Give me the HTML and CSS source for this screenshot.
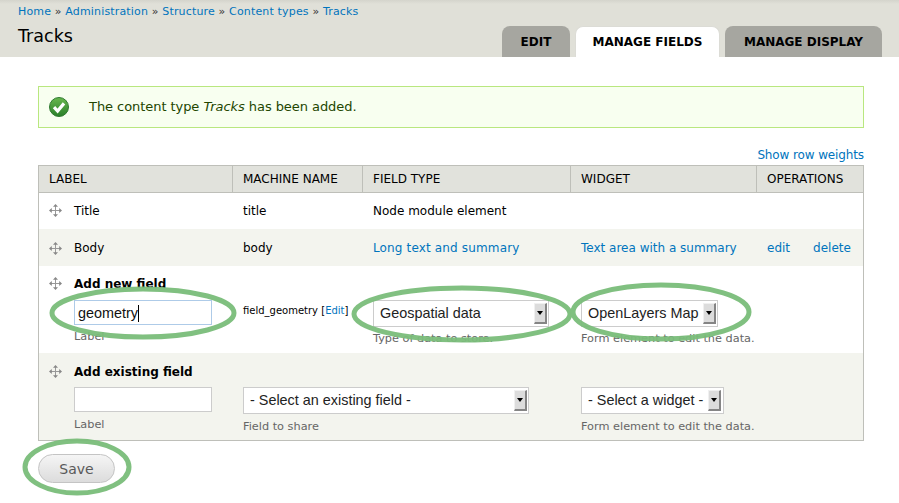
FILE: index.html
```html
<!DOCTYPE html>
<html lang="en">
<head>
<meta charset="utf-8">
<title>Tracks</title>
<link rel="stylesheet" href="styles.css">
</head>
<body>
<header class="head">
  <div class="head-left">
    <nav class="crumbs"><a href="#">Home</a> » <a href="#">Administration</a> » <a href="#">Structure</a> » <a href="#">Content types</a> » <a href="#">Tracks</a></nav>
    <h1 class="title">Tracks</h1>
  </div>
  <ul class="tabs">
    <li class="tab tab-edit">EDIT</li>
    <li class="tab tab-active">MANAGE FIELDS</li>
    <li class="tab tab-display">MANAGE DISPLAY</li>
  </ul>
</header>
<main class="page">
  <div class="message">
    <svg class="msg-icon" width="20" height="20" viewBox="0 0 20 20"><defs><linearGradient id="g" x1="0" y1="0" x2="0" y2="1"><stop offset="0" stop-color="#68b84e"/><stop offset="1" stop-color="#2a7f2a"/></linearGradient></defs><circle cx="10" cy="10" r="9.5" fill="url(#g)" stroke="#2f7a30"/><path d="M5 10.2 L8.6 14 L15 6.4" fill="none" stroke="#fff" stroke-width="3.2"/></svg>
    <span>The content type <em>Tracks</em> has been added.</span>
  </div>
  <div class="weights"><a href="#">Show row weights</a></div>
  <table class="fields">
    <colgroup><col class="c1"><col class="c2"><col class="c3"><col class="c4"><col class="c5"></colgroup>
    <thead><tr><th>LABEL</th><th>MACHINE NAME</th><th>FIELD TYPE</th><th>WIDGET</th><th>OPERATIONS</th></tr></thead>
    <tbody>
      <tr class="row-plain row-first">
        <td><div class="with-handle"><svg class="handle" viewBox="0 0 13 13"><use href="#h"/></svg>Title</div></td>
        <td>title</td><td>Node module element</td><td></td><td></td>
      </tr>
      <tr class="row-plain row-even row-body">
        <td><div class="with-handle"><svg class="handle" viewBox="0 0 13 13"><use href="#h"/></svg>Body</div></td>
        <td>body</td><td><a class="wide" href="#">Long text and summary</a></td><td><a href="#">Text area with a summary</a></td>
        <td><div class="ops"><a href="#">edit</a><a href="#">delete</a></div></td>
      </tr>
      <tr class="row-add">
        <td>
          <div class="with-handle strong"><svg class="handle" viewBox="0 0 13 13"><use href="#h"/></svg>Add new field</div>
          <div class="field-indent"><div class="input input-focus">geometry<i class="caret"></i></div><div class="hint">Label</div></div>
        </td>
        <td><div class="spacer"></div><div class="machine">field_geometry [<a href="#">Edit</a>]</div></td>
        <td><div class="spacer"></div><div class="select s-geo"><span>Geospatial data</span><i class="arrow"></i></div><div class="hint">Type of data to store.</div></td>
        <td><div class="spacer"></div><div class="select s-ol"><span>OpenLayers Map</span><i class="arrow"></i></div><div class="hint">Form element to edit the data.</div></td>
        <td></td>
      </tr>
      <tr class="row-add row-even row-existing">
        <td>
          <div class="with-handle strong"><svg class="handle" viewBox="0 0 13 13"><use href="#h"/></svg>Add existing field</div>
          <div class="field-indent"><div class="input"></div><div class="hint">Label</div></div>
        </td>
        <td colspan="2"><div class="spacer"></div><div class="select s-exist"><span>- Select an existing field -</span><i class="arrow"></i></div><div class="hint">Field to share</div></td>
        <td colspan="2"><div class="spacer"></div><div class="select s-widget"><span>- Select a widget -</span><i class="arrow"></i></div><div class="hint">Form element to edit the data.</div></td>
      </tr>
    </tbody>
  </table>
  <button class="save" type="button">Save</button>
</main>
<svg class="defs" width="0" height="0"><defs><g id="h"><path d="M6.5 1.5V11.5M1.5 6.5H11.5" fill="none" stroke="#999"/><path d="M6.5 0 9 2.8H4ZM6.5 13 9 10.2H4ZM0 6.5 2.8 4V9ZM13 6.5 10.2 4V9Z" fill="#888"/></g></defs></svg>
<svg class="marks" width="899" height="503" viewBox="0 0 899 503">
  <g fill="none" stroke="#7abd7a" stroke-width="5" opacity=".95">
    <ellipse cx="143" cy="313" rx="91" ry="24"/>
    <ellipse cx="462" cy="314" rx="108" ry="26"/>
    <ellipse cx="661" cy="312" rx="88" ry="27"/>
    <ellipse cx="77" cy="467" rx="52" ry="26"/>
  </g>
</svg>
</body>
</html>
```

FILE: styles.css
```css
* { box-sizing: border-box; }
html, body { margin: 0; padding: 0; }
body {
  width: 899px;
  height: 503px;
  overflow: hidden;
  position: relative;
  background: #fff;
  color: #000;
  font-family: "DejaVu Sans", sans-serif;
  font-size: 12px;
  line-height: 18px;
}
a { color: #0074bd; text-decoration: none; }
.head {
  height: 57px;
  padding: 0 17px 0 18px;
  background: linear-gradient(#d4d4cc 0, #e0e0d8 4px);
  display: flex;
  justify-content: space-between;
}
.crumbs { font-size: 11px; letter-spacing: .16px; line-height: 14px; padding-top: 5px; color: #333; }
.title { margin: 5px 0 0; font-size: 17.5px; font-weight: 400; line-height: 24px; }
.tabs { list-style: none; margin: 26px 0 0; padding: 0; display: flex; gap: 5px; }
.tab {
  height: 31px;
  background: #a6a6a0;
  border-radius: 8px 8px 0 0;
  font-weight: 700;
  font-size: 12px;
  line-height: 32px;
  text-align: center;
}
.tab-edit { width: 68px; }
.tab-active { width: 145px; background: #fff; border: 1px solid #dcdcd6; border-bottom: 0; line-height: 30px; }
.tab-display { width: 157px; }
.page { padding: 29px 35px 0 38px; }
.message {
  height: 42px;
  display: flex;
  align-items: center;
  padding-left: 10px;
  gap: 20px;
  background: #f8fff0;
  border: 1px solid #b9e77f;
  color: #234600;
  font-size: 13px;
  letter-spacing: -.06px;
}
.msg-icon { flex: none; }
.weights { margin-top: 18px; height: 19px; text-align: right; line-height: 18px; letter-spacing: -.12px; }
.fields {
  width: 825px;
  table-layout: fixed;
  border-collapse: collapse;
  border: 1px solid #bebfb9;
}
.c1 { width: 194px; }
.c2 { width: 130px; }
.c3 { width: 208px; }
.c4 { width: 186px; }
.c5 { width: 107px; }
th {
  height: 27px;
  padding: 0 10px;
  text-align: left;
  font-weight: 400;
  background: #e1e2dc;
  border: 1px solid #bebfb9;
}
td { padding: 0 10px; vertical-align: top; white-space: nowrap; }
td + td { padding-left: 10.5px; }
.wide { letter-spacing: .15px; }
.row-plain td { height: 37px; vertical-align: middle; }
.row-first td { height: 36px; }
.row-body td { padding-top: 2px; }
.row-even td { background: #f3f4ee; }
.row-add td { height: 87px; padding-top: 8px; }
.row-add .with-handle { margin-top: 1px; }
.row-existing td { height: 88px; }
.row-existing .with-handle { margin-top: 2px; }
.row-existing .field-indent { margin-top: 6px; }
.row-existing .hint { margin-top: 5px; }
.with-handle { display: flex; align-items: center; height: 18px; }
.strong { font-weight: 700; }
.handle { width: 13px; height: 13px; margin: 0 12px 0 0; flex: none; }
.field-indent { margin: 7px 0 0 25px; }
.spacer { height: 26px; }
.input {
  width: 138px;
  height: 25px;
  background: #fff;
  border: 1px solid #ccc;
  font: 14.4px/25px "Liberation Sans", sans-serif;
  padding-left: 3px;
  color: #111;
}
.input-focus { border-color: #aecbe8; }
.caret { display: inline-block; width: 1px; height: 17px; background: #000; vertical-align: -4px; }
.hint { margin-top: 4px; font-size: 11.3px; line-height: 16px; color: #666; }
.machine { font-size: 10px; line-height: 22px; }
.select {
  display: flex;
  align-items: center;
  justify-content: space-between;
  height: 27px;
  background: #fff;
  border: 1px solid #ccc;
  padding: 0 1px 0 6px;
  font: 14.4px/20px "Liberation Sans", sans-serif;
  color: #222;
}
.s-geo { width: 176px; }
.s-ol { width: 137px; }
.s-exist { width: 286px; }
.s-widget { width: 143px; padding-right: 2px; }
.arrow {
  flex: none;
  position: relative;
  width: 13px;
  height: 21px;
  background: #dcdcdc;
  border-top: 1px solid #f0f0f0;
  border-left: 1px solid #f0f0f0;
  border-right: 2px solid #858585;
  border-bottom: 2px solid #858585;
}
.arrow::after {
  content: "";
  position: absolute;
  left: 2px;
  top: 7px;
  border: 3px solid transparent;
  border-top: 4px solid #000;
}
.ops { display: flex; gap: 23px; }
.save {
  display: block;
  margin-top: 13px;
  width: 77px;
  height: 29px;
  border: 1px solid #c4c4c4;
  border-radius: 15px;
  background: linear-gradient(#f5f5f5, #dcdcdc);
  color: #5a5a5a;
  font: 14px "DejaVu Sans", sans-serif;
  padding: 0;
}
.defs { position: absolute; }
.marks { position: absolute; left: 0; top: 0; pointer-events: none; }
```
